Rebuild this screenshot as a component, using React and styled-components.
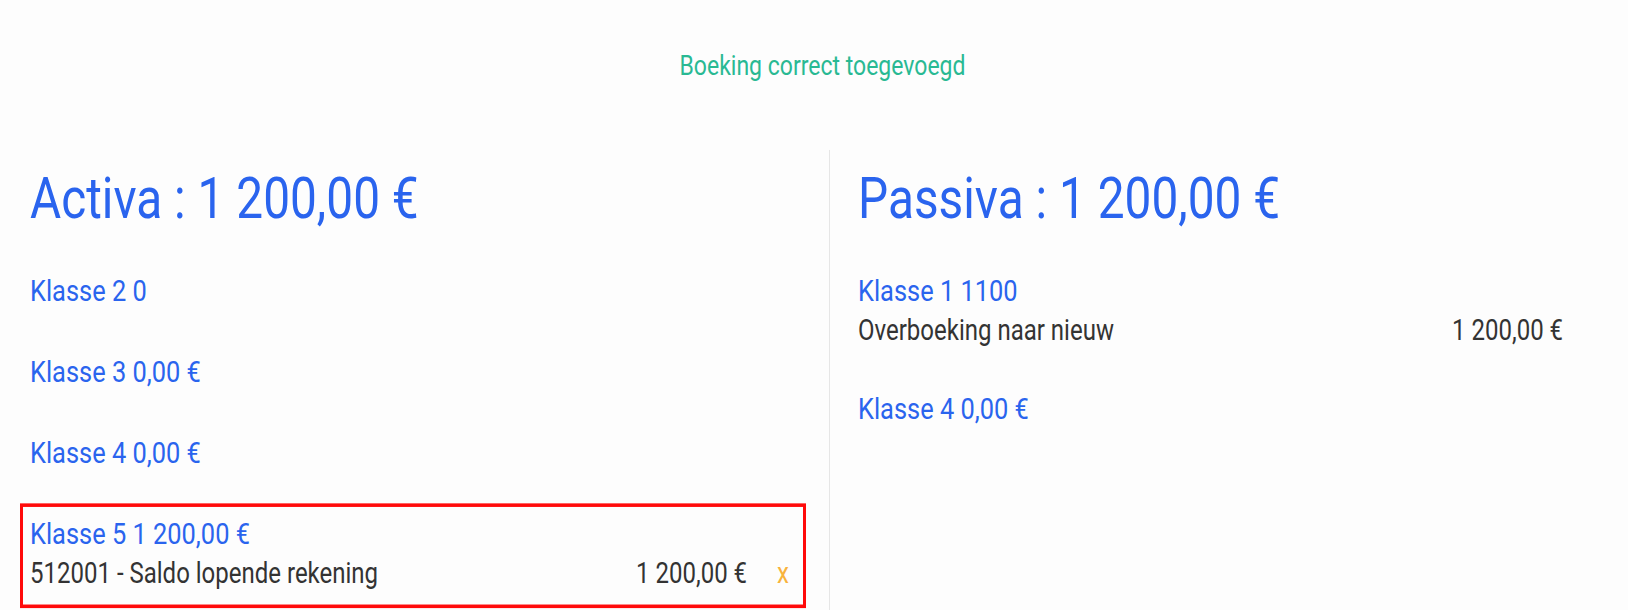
import React from "react"
import styled, { createGlobalStyle } from "styled-components"

const GlobalStyle = createGlobalStyle`
  html, body {
    margin: 0;
    padding: 0;
    background: #fdfdfd;
    overflow: hidden;
  }
  body {
    font-family: Roboto, "Liberation Sans", sans-serif;
  }
`

const Screen = styled.div`
  height: 100vh;
  overflow: hidden;
`

// the capture is stretched vertically, so the whole page is too
const Page = styled.div`
  width: 1645px;
  height: 513px;
  box-sizing: border-box;
  padding-top: 42px;
  display: flex;
  flex-direction: column;
  transform: scaleY(1.19);
  transform-origin: 0 0;
`

const Flash = styled.p`
  margin: 0 0 57px;
  text-align: center;
  font-size: 23px;
  line-height: 27px;
  color: #29b993;
`

const Balance = styled.div`
  flex: 1;
  display: grid;
  grid-template-columns: 829px 816px;
`

const Side = styled.section`
  padding: 13px 23px 0 ${props => (props.$right ? "18px" : "20px")};
  border-left: ${props => (props.$right ? "1px solid #e6e6e6" : "none")};
`

const Total = styled.h1`
  margin: 0 0 23.5px 10px;
  font-size: 47.8px;
  line-height: 56px;
  font-weight: 400;
  color: #2a64ee;
`

const ClassBox = styled.div`
  border: 3px solid ${props => (props.$active ? "#ff0a0a" : "transparent")};
  padding: 7px 14px ${props => (props.$empty ? "14px" : "11px")} 7px;
  margin-bottom: 11px;
`

const ClassTitle = styled.h3`
  margin: 0;
  font-size: 25.4px;
  line-height: 30px;
  font-weight: 400;
  color: #2a64ee;
`

const EntryList = styled.ul`
  list-style: none;
  margin: 4px 0 0;
  padding: 0;
`

const Entry = styled.li`
  display: flex;
  align-items: baseline;
  font-size: 24px;
  line-height: 30px;
  color: #333;
`

const EntryName = styled.span`
  flex: 1;
`

const Remove = styled.button`
  border: 0;
  background: none;
  padding: 0;
  margin-left: 30px;
  font: inherit;
  color: #f8b33c;
  cursor: pointer;
  visibility: ${props => (props.$hidden ? "hidden" : "visible")};
`

const activa = [
  { name: "Klasse 2", total: "0", entries: [] },
  { name: "Klasse 3", total: "0,00 €", entries: [] },
  { name: "Klasse 4", total: "0,00 €", entries: [] },
  {
    name: "Klasse 5",
    total: "1 200,00 €",
    active: true,
    entries: [{ label: "512001 - Saldo lopende rekening", amount: "1 200,00 €", removable: true }],
  },
]

const passiva = [
  {
    name: "Klasse 1",
    total: "1100",
    entries: [{ label: "Overboeking naar nieuw", amount: "1 200,00 €" }],
  },
  { name: "Klasse 4", total: "0,00 €", entries: [] },
]

const Column = ({ title, total, classes, right }) => (
  <Side $right={right}>
    <Total>
      {title} : {total}
    </Total>
    {classes.map(c => (
      <ClassBox key={c.name} $active={c.active} $empty={c.entries.length === 0}>
        <ClassTitle>
          {c.name} {c.total}
        </ClassTitle>
        {c.entries.length > 0 && (
          <EntryList>
            {c.entries.map(e => (
              <Entry key={e.label}>
                <EntryName>{e.label}</EntryName>
                <span>{e.amount}</span>
                <Remove $hidden={!e.removable}>x</Remove>
              </Entry>
            ))}
          </EntryList>
        )}
      </ClassBox>
    ))}
  </Side>
)

const App = () => {
  return (
    <Screen>
      <GlobalStyle />
      <Page>
        <Flash>Boeking correct toegevoegd</Flash>
        <Balance>
          <Column title="Activa" total="1 200,00 €" classes={activa} />
          <Column title="Passiva" total="1 200,00 €" classes={passiva} right />
        </Balance>
      </Page>
    </Screen>
  )
}

export default App
